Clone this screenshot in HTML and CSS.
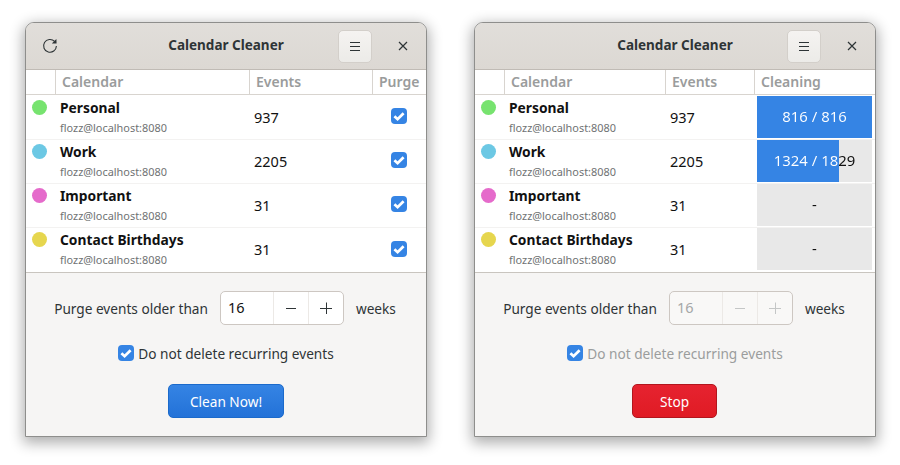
FILE: index.html
```html
<!DOCTYPE html>
<html lang="en">
<head>
<meta charset="utf-8">
<title>Calendar Cleaner</title>
<link rel="stylesheet" href="styles.css">
</head>
<body>
<svg class="defs" width="0" height="0" aria-hidden="true">
  <symbol id="check" viewBox="0 0 16 16"><path d="M3.4 8.2 6.6 11.2 12.6 5.2" fill="none" stroke="#fff" stroke-width="2.7"/></symbol>
</svg>
<main class="desktop">
  <section class="window">
    <header class="titlebar">
      <div class="tb-left">
        <svg class="refresh" width="16" height="16" viewBox="0 0 16 16"><path d="M12.6 3.4A6.4 6.4 0 1 0 14.4 8" fill="none" stroke="#2e3436" stroke-width="1.1"/><path d="M9.8 5.4 14.6 5.6 14.4 1z" fill="#2e3436"/></svg>
      </div>
      <h1 class="title">Calendar Cleaner</h1>
      <div class="tb-right">
        <button class="menu-btn"><span></span><span></span><span></span></button>
        <div class="close"><svg width="10" height="10" viewBox="0 0 10 10"><path d="M1 1 9 9M9 1 1 9" fill="none" stroke="#2e3436" stroke-width="1.2"/></svg></div>
      </div>
    </header>
    <div class="table cols-a">
      <div class="th"></div><div class="th sep">Calendar</div><div class="th sep">Events</div><div class="th sep">Purge</div>

      <div class="c dotc"><i class="dot green"></i></div>
      <div class="c cal"><b>Personal</b><small>flozz@localhost:8080</small></div>
      <div class="c num">937</div>
      <div class="c pur"><svg class="cb"><use href="#check"/></svg></div>

      <div class="c dotc"><i class="dot cyan"></i></div>
      <div class="c cal"><b>Work</b><small>flozz@localhost:8080</small></div>
      <div class="c num">2205</div>
      <div class="c pur"><svg class="cb"><use href="#check"/></svg></div>

      <div class="c dotc"><i class="dot pink"></i></div>
      <div class="c cal"><b>Important</b><small>flozz@localhost:8080</small></div>
      <div class="c num">31</div>
      <div class="c pur"><svg class="cb"><use href="#check"/></svg></div>

      <div class="c dotc last"><i class="dot yellow"></i></div>
      <div class="c cal last"><b>Contact Birthdays</b><small>flozz@localhost:8080</small></div>
      <div class="c num last">31</div>
      <div class="c pur last"><svg class="cb"><use href="#check"/></svg></div>
    </div>
    <div class="controls">
      <div class="purge-row">
        <span class="lbl">Purge events older than</span>
        <div class="spin"><span class="val">16</span><span class="step"><svg width="12" height="12" viewBox="0 0 12 12"><path d="M1 6.5H11" stroke="currentColor" fill="none"/></svg></span><span class="step"><svg width="12" height="12" viewBox="0 0 12 12"><path d="M0 6.5H12M6.5 0.5V12.5" stroke="currentColor" fill="none"/></svg></span></div>
        <span class="lbl">weeks</span>
      </div>
      <div class="check-row"><svg class="cb"><use href="#check"/></svg><span class="lbl">Do not delete recurring events</span></div>
      <button class="action blue">Clean Now!</button>
    </div>
  </section>

  <section class="window">
    <header class="titlebar">
      <div class="tb-left"></div>
      <h1 class="title">Calendar Cleaner</h1>
      <div class="tb-right">
        <button class="menu-btn"><span></span><span></span><span></span></button>
        <div class="close"><svg width="10" height="10" viewBox="0 0 10 10"><path d="M1 1 9 9M9 1 1 9" fill="none" stroke="#2e3436" stroke-width="1.2"/></svg></div>
      </div>
    </header>
    <div class="table cols-b">
      <div class="th"></div><div class="th sep">Calendar</div><div class="th sep">Events</div><div class="th sep">Cleaning</div>

      <div class="c dotc"><i class="dot green"></i></div>
      <div class="c cal"><b>Personal</b><small>flozz@localhost:8080</small></div>
      <div class="c num">937</div>
      <div class="c prog-c"><div class="prog" style="--p:100%"><span>816 / 816</span></div></div>

      <div class="c dotc"><i class="dot cyan"></i></div>
      <div class="c cal"><b>Work</b><small>flozz@localhost:8080</small></div>
      <div class="c num">2205</div>
      <div class="c prog-c"><div class="prog" style="--p:71.3%"><span>1324 / 1829</span></div></div>

      <div class="c dotc"><i class="dot pink"></i></div>
      <div class="c cal"><b>Important</b><small>flozz@localhost:8080</small></div>
      <div class="c num">31</div>
      <div class="c prog-c"><div class="prog" style="--p:0%"><span>-</span></div></div>

      <div class="c dotc last"><i class="dot yellow"></i></div>
      <div class="c cal last"><b>Contact Birthdays</b><small>flozz@localhost:8080</small></div>
      <div class="c num last">31</div>
      <div class="c prog-c last"><div class="prog" style="--p:0%"><span>-</span></div></div>
    </div>
    <div class="controls">
      <div class="purge-row">
        <span class="lbl">Purge events older than</span>
        <div class="spin off"><span class="val">16</span><span class="step"><svg width="12" height="12" viewBox="0 0 12 12"><path d="M1 6.5H11" stroke="currentColor" fill="none"/></svg></span><span class="step"><svg width="12" height="12" viewBox="0 0 12 12"><path d="M0 6.5H12M6.5 0.5V12.5" stroke="currentColor" fill="none"/></svg></span></div>
        <span class="lbl">weeks</span>
      </div>
      <div class="check-row off"><svg class="cb"><use href="#check"/></svg><span class="lbl">Do not delete recurring events</span></div>
      <button class="action red">Stop</button>
    </div>
  </section>
</main>
</body>
</html>
```
FILE: styles.css
```css
* { box-sizing: border-box; }
html, body { margin: 0; height: 100%; }
body {
  background: #fff;
  font-family: "Noto Sans", "Open Sans", sans-serif;
  color: #2e3436;
  overflow: hidden;
}
.defs { position: absolute; }
.desktop {
  display: flex;
  gap: 47px;
  padding: 22px 0 0 25px;
}
.window {
  width: 402px;
  height: 415px;
  display: flex;
  flex-direction: column;
  border: 1px solid #8e8e8c;
  border-radius: 9px 9px 0 0;
  background: #f6f5f4;
  box-shadow: 0 4px 14px 2px rgba(0,0,0,.32);
  overflow: hidden;
}
.titlebar {
  height: 47px;
  flex: none;
  display: grid;
  grid-template-columns: 1fr auto 1fr;
  align-items: center;
  background: linear-gradient(#e1deda, #dcd8d3);
  border-bottom: 1px solid #c0bbb5;
}
.tb-left { padding-left: 16px; display: flex; align-items: center; }
.refresh { display: block; }
.title {
  margin: 0 0 2px;
  font-size: 13.5px;
  font-weight: 700;
  color: #2e3436;
}
.tb-right { display: flex; justify-content: flex-end; align-items: center; }
.menu-btn {
  width: 34px;
  height: 33px;
  margin-right: 8px;
  padding: 0;
  display: flex;
  flex-direction: column;
  justify-content: center;
  align-items: center;
  gap: 3px;
  border: 1px solid #d3cfca;
  border-radius: 5px;
  background: linear-gradient(#f5f3f1, #ecebe8);
}
.menu-btn span { display: block; width: 10px; height: 1px; background: #2e3436; }
.close { width: 46px; display: flex; justify-content: center; align-items: center; }
.close svg { display: block; }
.table {
  flex: none;
  display: grid;
  grid-template-rows: 26px repeat(4, 44px);
  background: #fff;
  border-bottom: 1px solid #c9c5bf;
}
.cols-a { grid-template-columns: 29px 194px 123px 1fr; }
.cols-b { grid-template-columns: 29px 161px 89px 1fr; }
.th {
  height: 25px;
  border-bottom: 1px solid #d8d4cf;
  font-size: 14px;
  font-weight: 600;
  line-height: 24px;
  color: #9a9c9c;
  padding-left: 6px;
}
.sep { border-left: 1px solid #d8d4cf; }
.c {
  display: flex;
  align-items: center;
  border-bottom: 1px solid #f3f2f1;
  font-size: 14.5px;
  color: #111;
}
.c.last { border-bottom: 0; }
.dotc { align-items: flex-start; justify-content: center; padding: 4px 2px 0 0; }
.dot { display: block; width: 15px; height: 15px; border-radius: 50%; }
.green { background: #77e36f; }
.cyan { background: #6cc8e4; }
.pink { background: #e56bcb; }
.yellow { background: #e6d64e; }
.cal {
  flex-direction: column;
  align-items: flex-start;
  justify-content: flex-start;
  padding: 2px 0 0 5px;
}
.cal b { font-size: 13.8px; font-weight: 700; line-height: 20px; color: #111; }
.cal small { font-size: 10.9px; line-height: 20px; color: #6f7273; }
.num { padding: 0 0 2px 5px; }
.pur { justify-content: center; padding-bottom: 3px; }
.cb {
  display: block;
  flex: none;
  width: 16px;
  height: 16px;
  border-radius: 4px;
  background: #3584e4;
}
.prog-c { padding: 0 3px 1px; align-items: stretch; }
.c.prog-c.last { padding-bottom: 2px; }
.prog {
  flex: 1;
  display: flex;
  background: linear-gradient(90deg, #3584e4 var(--p), #e8e8e8 0);
}
.prog span {
  flex: 1;
  display: flex;
  justify-content: center;
  align-items: center;
  padding-bottom: 2px;
  font-size: 14.9px;
  white-space: nowrap;
  color: transparent;
  background: linear-gradient(90deg, #fff var(--p), #111 0);
  -webkit-background-clip: text;
  background-clip: text;
}
.controls {
  flex: 1;
  display: flex;
  flex-direction: column;
  align-items: center;
  padding-top: 18px;
}
.purge-row { display: flex; align-items: center; gap: 12px; height: 34px; margin-right: 2px; }
.lbl { font-size: 13.65px; color: #2e3436; }
.spin {
  display: flex;
  width: 124px;
  height: 34px;
  background: #fff;
  border: 1px solid #cdc7c2;
  border-radius: 5px;
  font-size: 14.5px;
  color: #111;
}
.val { width: 52px; padding-left: 7px; line-height: 31px; }
.step {
  flex: 1;
  display: flex;
  justify-content: center;
  align-items: center;
  border-left: 1px solid #ece9e6;
  color: #2e3436;
}
.step svg { display: block; }
.spin.off { background: #f9f8f7; color: #a5a7a7; }
.spin.off .step { color: #c4c6c6; }
.check-row {
  display: flex;
  align-items: center;
  gap: 4px;
  margin-top: 17px;
  height: 22px;
}
.check-row.off .lbl { color: #9b9d9d; }
.action {
  margin-top: 20px;
  height: 34px;
  padding: 0;
  border-radius: 5px;
  font: 13.65px "Noto Sans", "Open Sans", sans-serif;
  color: #fff;
}
.blue {
  width: 116px;
  border: 1px solid #1b6acb;
  background: linear-gradient(#3584e4, #2372d8);
}
.red {
  width: 85px;
  margin-right: 1px;
  border: 1px solid #b2161d;
  background: linear-gradient(#e62330, #e01b24);
}
```
